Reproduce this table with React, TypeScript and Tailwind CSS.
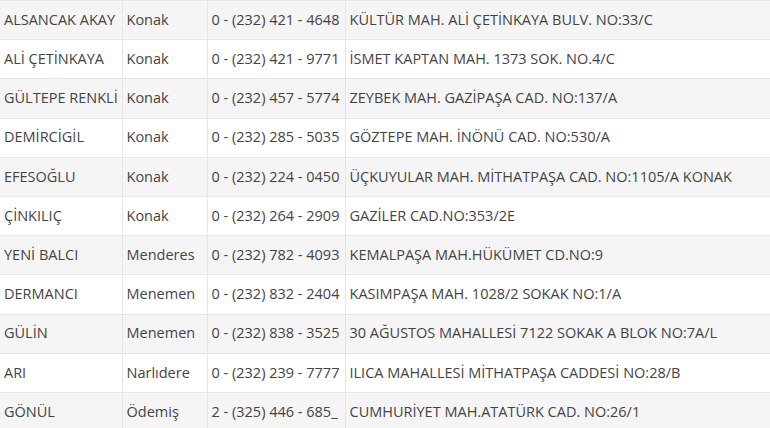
import React from "react";

const rows: [string, string, string, string][] = [
  ["ALSANCAK AKAY", "Konak", "0 - (232) 421 - 4648", "KÜLTÜR MAH. ALİ ÇETİNKAYA BULV. NO:33/C"],
  ["ALİ ÇETİNKAYA", "Konak", "0 - (232) 421 - 9771", "İSMET KAPTAN MAH. 1373 SOK. NO.4/C"],
  ["GÜLTEPE RENKLİ", "Konak", "0 - (232) 457 - 5774", "ZEYBEK MAH. GAZİPAŞA CAD. NO:137/A"],
  ["DEMİRCİGİL", "Konak", "0 - (232) 285 - 5035", "GÖZTEPE MAH. İNÖNÜ CAD. NO:530/A"],
  ["EFESOĞLU", "Konak", "0 - (232) 224 - 0450", "ÜÇKUYULAR MAH. MİTHATPAŞA CAD. NO:1105/A KONAK"],
  ["ÇİNKILIÇ", "Konak", "0 - (232) 264 - 2909", "GAZİLER CAD.NO:353/2E"],
  ["YENİ BALCI", "Menderes", "0 - (232) 782 - 4093", "KEMALPAŞA MAH.HÜKÜMET CD.NO:9"],
  ["DERMANCI", "Menemen", "0 - (232) 832 - 2404", "KASIMPAŞA MAH. 1028/2 SOKAK NO:1/A"],
  ["GÜLİN", "Menemen", "0 - (232) 838 - 3525", "30 AĞUSTOS MAHALLESİ 7122 SOKAK A BLOK NO:7A/L"],
  ["ARI", "Narlıdere", "0 - (232) 239 - 7777", "ILICA MAHALLESİ MİTHATPAŞA CADDESİ NO:28/B"],
  ["GÖNÜL", "Ödemiş", "2 - (325) 446 - 685_", "CUMHURİYET MAH.ATATÜRK CAD. NO:26/1"],
];

export default function App() {
  return (
    <div className="w-[770px] h-[428px] overflow-hidden bg-white" style={{ fontFamily: '"Open Sans", "Noto Sans", sans-serif' }}>
      <table className="w-[770px] table-fixed border-collapse text-[14.5px] text-[#444444]">
        <colgroup>
          <col className="w-[122px]" />
          <col className="w-[85px]" />
          <col className="w-[138px]" />
          <col />
        </colgroup>
        <tbody>
          {rows.map((r, i) => (
            <tr key={i} className={i % 2 === 0 ? "bg-[#f5f5f5]" : "bg-white"}>
              {r.map((c, j) => (
                <td
                  key={j}
                  className="h-[39.2px] border border-[#e6e6e6] pl-[4px] pr-0 align-middle whitespace-nowrap overflow-hidden leading-none first:border-l-0 last:border-r-0"
                >
                  {c}
                </td>
              ))}
            </tr>
          ))}
        </tbody>
      </table>
    </div>
  );
}
